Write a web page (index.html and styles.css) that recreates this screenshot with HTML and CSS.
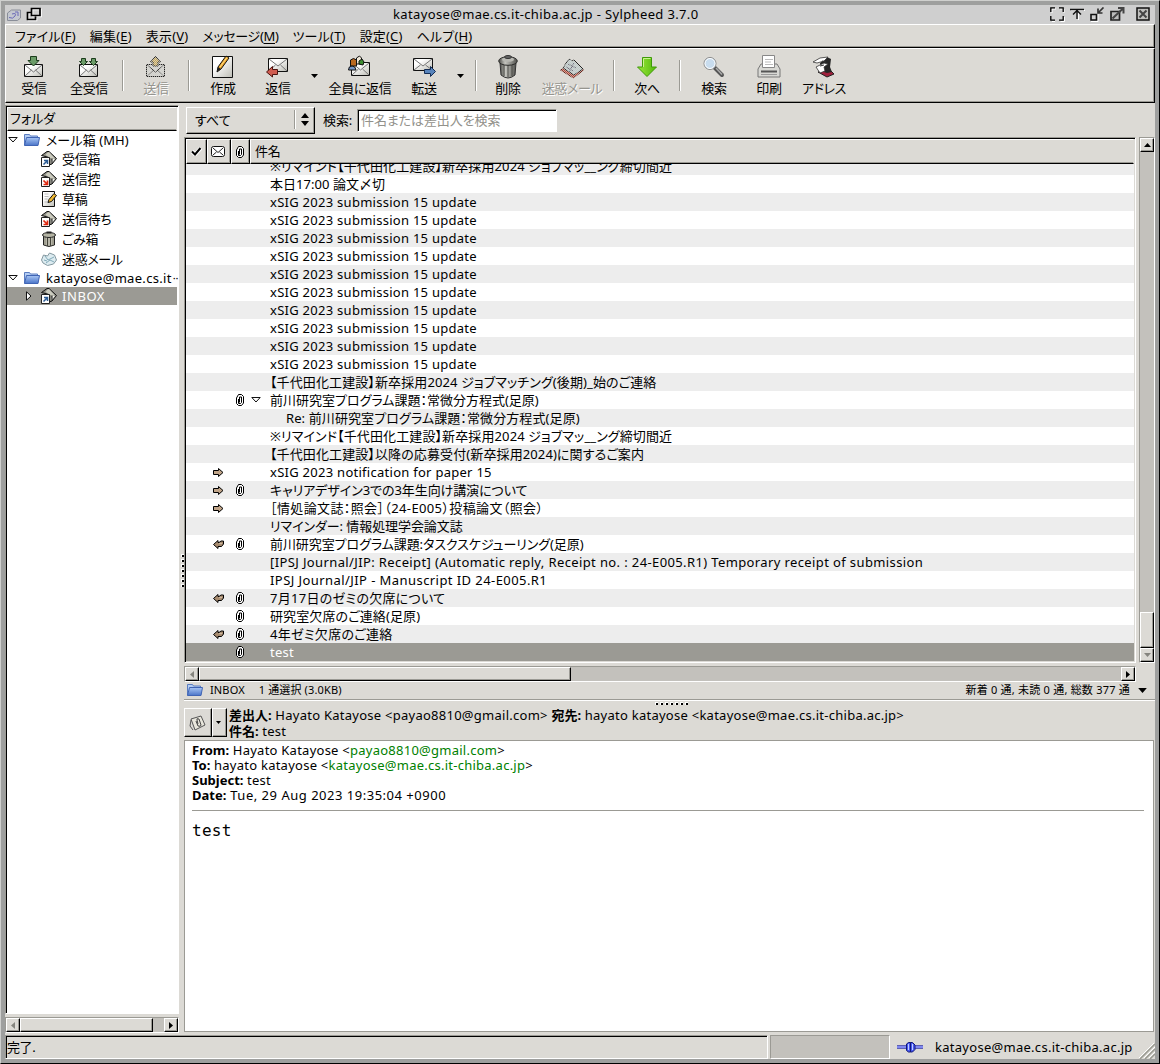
FILE: index.html
```html
<!DOCTYPE html>
<html lang="ja">
<head>
<meta charset="utf-8">
<title>katayose@mae.cs.it-chiba.ac.jp - Sylpheed 3.7.0</title>
<link rel="stylesheet" href="styles.css">
</head>
<body>
<svg class="defs" width="0" height="0">
  <defs>
    <linearGradient id="gFolder" x1="0" y1="0" x2="0" y2="1"><stop offset="0" stop-color="#a8c6f4"/><stop offset="1" stop-color="#4a74c8"/></linearGradient>
    <linearGradient id="gCan" x1="0" x2="1" y1="0" y2="0"><stop offset="0" stop-color="#4c4c48"/><stop offset=".35" stop-color="#c4c4be"/><stop offset="1" stop-color="#50504c"/></linearGradient>
    <linearGradient id="gPaper" x1="0" x2="1" y1="0" y2="1"><stop offset=".3" stop-color="#fff"/><stop offset="1" stop-color="#bdbdb5"/></linearGradient>
    <linearGradient id="gGreen" x1="0" x2="1" y1="0" y2="0"><stop offset="0" stop-color="#9be83c"/><stop offset="1" stop-color="#52b80c"/></linearGradient>
    <pattern id="dots" width="2" height="2" patternUnits="userSpaceOnUse"><path d="M0 0h1v1H0zM1 1h1v1H1z" fill="#dcdad5"/></pattern>
  </defs>
  <symbol id="clip" viewBox="0 0 8 12"><path d="M2.500.5h3l2 2v6.500l-2 2.500h-3l-2-2V4z" fill="#fff" stroke="#000"/><path d="M3.500 8.500V3h2v5.500l-1 1h-2V5" fill="none" stroke="#000"/></symbol>
  <symbol id="fwd" viewBox="0 0 11 9"><path d="M.5 2.500h5v-2l4.500 4-4.500 4v-2h-5z" fill="#c0a488" stroke="#000"/></symbol>
  <symbol id="rep" viewBox="0 0 11 9"><path d="M.5 4.500l4.500-4v2h1L8 1h2.500v3l-2 2.500H5v2z" fill="#a88c70" stroke="#000"/><path d="M6 3.500h3" stroke="#ccb8a0"/></symbol>
  <symbol id="folder" viewBox="0 0 16 12"><path d="M.5 11V.5h5l1 1.500h7V11z" fill="#b4cdf2" stroke="#5a7cc0"/><path d="M.5 11.500L2.500 3.500h13l-1.500 8z" fill="url(#gFolder)" stroke="#4064b4"/></symbol>
  <symbol id="tray" viewBox="0 0 16 16"><path d="M.5 4.500L6 .5h2l7.500 7-4.500 5.500-3 1V6.500z" fill="#8a8a80" stroke="#111"/><path d="M6 2l2-1 6 6.500-3 .5L4.500 4z" fill="#ccccbf"/><path d="M11 8l-1 5 4-5z" fill="#f4f4ee"/><path d="M11 7.500V13" stroke="#111" fill="none"/><path d="M.5 6.500h8v9h-8z" fill="#fff" stroke="#222"/></symbol>
  <symbol id="inbox" viewBox="0 0 16 16"><use href="#tray"/><path d="M2.500 13.500L6 10M3 9.500h3.500V13" stroke="#2c5c94" stroke-width="1.500" fill="none"/></symbol>
  <symbol id="outbox" viewBox="0 0 16 16"><use href="#tray"/><path d="M2.500 9.500L6 13M2.500 13.500h4V9.500" stroke="#e02810" stroke-width="1.700" fill="none"/></symbol>
  <symbol id="note" viewBox="0 0 24 24"><path d="M1.500 1.500h20v21h-20z" fill="url(#gPaper)" stroke="#111"/><path d="M6 17l1-5L15 1l3 2-8 11z" fill="#f0a828" stroke="#111"/><path d="M6 17l1-5 3 2z" fill="#222"/><path d="M9 12L16 2.500" stroke="#ffe090"/></symbol>
  <symbol id="draft" viewBox="0 0 16 16"><path d="M1.500.5h12v15h-12z" fill="url(#gPaper)" stroke="#111"/><path d="M3.500 3h4M3.500 5.500h4M3.500 8h3M3.500 11h5" stroke="#bbb"/><path d="M7 11.500l1-3L13 2.500l2.500 2-5 6z" fill="#f0b830" stroke="#111"/></symbol>
  <symbol id="can" viewBox="0 0 20 24"><path d="M2 8h16l-1 12q-7 6-14 0z" fill="url(#gCan)" stroke="#333"/><path d="M6 10v11M10 10v12M14 10v11" stroke="#4a4a46"/><ellipse cx="10" cy="6" rx="9.300" ry="4.300" fill="url(#gCan)" stroke="#2a2a28"/><ellipse cx="10" cy="4.500" rx="6" ry="2.300" fill="#b8b8b2"/><ellipse cx="10" cy="2" rx="3.500" ry="1.500" fill="#666" stroke="#333"/></symbol>
  <symbol id="smallcan" viewBox="0 0 14 16"><path d="M1.500 4h11v10q-5.500 3-11 0z" fill="#d8d6c8" stroke="#222"/><path d="M3 6v8.500M11 6v8.500" stroke="#666658"/><path d="M5.500 7v8M8.500 7v8" stroke="#44443a" stroke-width="1.400"/><ellipse cx="7" cy="4" rx="6.500" ry="2.500" fill="#b4b4a4" stroke="#222"/><path d="M4.500 1.500h5" stroke="#222" stroke-width="2"/></symbol>
  <symbol id="junk" viewBox="0 0 16 14"><path d="M.5 8l2-5 4 1 2-3 5 2 2 5-3 4-6 1.500L2 11z" fill="#dcebf0" stroke="#8498a0"/><path d="M4 4l3 4 6-3M5 11l4-3 4 2M3 8l3 1" stroke="#82aab8" fill="none"/></symbol>
  <symbol id="au" viewBox="0 0 7 4"><path d="M0 4L3.500 0 7 4z" fill="currentColor"/></symbol>
  <symbol id="ad" viewBox="0 0 7 4"><path d="M0 0L3.500 4 7 0z" fill="currentColor"/></symbol>
  <symbol id="al" viewBox="0 0 4 7"><path d="M4 0L0 3.500 4 7z" fill="currentColor"/></symbol>
  <symbol id="ar" viewBox="0 0 4 7"><path d="M0 0L4 3.500 0 7z" fill="currentColor"/></symbol>
  <symbol id="open" viewBox="0 0 10 6"><path d="M.8.5h8.400L5 5z" fill="#fff" stroke="#111"/></symbol>
  <symbol id="closed" viewBox="0 0 6 10"><path d="M.5.8v8.400L5 5z" fill="#fff" stroke="#111"/></symbol>
</svg>

<div class="window">
  <header class="titlebar">
    <svg class="app" width="14" height="14" viewBox="0 0 14 14"><path d="M.5 5l4-3h9v8l-3 2.500H.5z" fill="#c4c8d0" stroke="#8a8e98"/><path d="M2 9.500q4 2 6-1.500t-3-2M8 4h3v4" stroke="#6a6ab8" fill="none"/></svg>
    <svg class="stack" width="16" height="15" viewBox="0 0 16 15"><path d="M5.500 5.500H1.500v7h8V10M5.500 1.500h8.500v7H5.500z" fill="none" stroke="#fff" stroke-width="1.600" transform="translate(1 1)"/><path d="M5.500 5.500H1.500v7h8V9.500M5.500 1.500h8.500v7H5.500z" fill="none" stroke="#000" stroke-width="1.700"/></svg>
    <h1>katayose@mae.cs.it-chiba.ac.jp - Sylpheed 3.7.0</h1>
    <div class="winbtns">
      <svg width="15" height="15" viewBox="0 0 15 15"><g fill="none"><path d="M2 6V2h4M10 2h4v4M14.500 10v4.500h-4M5 14.500H2" stroke="#fff"/><path d="M.8 5V.8H5M9 .8h4.200V5M13.200 9v4.200H9M5 13.200H.8V9" stroke="#000" stroke-width="1.300"/></g></svg>
      <svg width="15" height="15" viewBox="0 0 15 15"><path d="M1 3.500h14M8.500 4v9" stroke="#fff"/><path d="M0 2.500h14M7 3v9M3 7.500l4-4 4 4" fill="none" stroke="#111" stroke-width="1.400"/></svg>
      <svg width="15" height="15" viewBox="0 0 15 15"><path d="M1 14.500h7V7" stroke="#fff" fill="none"/><path d="M1 7.500h5.500V13H1z" fill="none" stroke="#111" stroke-width="1.600"/><path d="M13.500.5L8.500 5.500M8 1.500V6h4.500" fill="none" stroke="#333" stroke-width="1.700"/></svg>
      <svg width="15" height="15" viewBox="0 0 15 15"><path d="M1 4.500h8.500V13H1z" fill="#bbb" stroke="#222" stroke-width="1.700"/><path d="M2.500 11.500L13 1.500M8 1h5.500v5.500" fill="none" stroke="#444" stroke-width="2"/></svg>
      <svg class="close" width="14" height="14" viewBox="0 0 14 14"><path d="M1 1h12v12H1z" fill="#c0c0be" stroke="#111" stroke-width="1.500"/><path d="M3.500 3.500l7 7M10.500 3.500l-7 7" stroke="#444" stroke-width="2"/></svg>
    </div>
  </header>

  <nav class="menubar">
    <span>ファイル(<u>F</u>)</span><span>編集(<u>E</u>)</span><span>表示(<u>V</u>)</span><span class="tight">メッセージ(<u>M</u>)</span><span>ツール(<u>T</u>)</span><span>設定(<u>C</u>)</span><span>ヘルプ(<u>H</u>)</span>
  </nav>

  <div class="toolbar">
    <button><svg width="22" height="24" viewBox="0 0 22 24"><path d="M1.500 9.500h18v12h-18z" fill="url(#gPaper)" stroke="#111"/><path d="M2 10l8.500 7 8.500-7M2 21l6.500-6M19 21l-6.500-6" fill="none" stroke="#777"/><path d="M7.500 1.500h6v4h2.500L10.500 11 5 5.500h2.500z" fill="#6b9c68" stroke="#1c3c1c"/></svg>受信</button>
    <button><svg width="22" height="24" viewBox="0 0 22 24"><path d="M1.500 9.500h18v12h-18z" fill="url(#gPaper)" stroke="#111"/><path d="M2 10l8.500 7 8.500-7M2 21l6.500-6M19 21l-6.500-6" fill="none" stroke="#777"/><path d="M3.500 3.500h4v3h2L5.500 10.500 1.500 6.500h2zM13.500 3.500h4v3h2l-4 4-4-4h2z" fill="#6b9c68" stroke="#1c3c1c"/></svg>全受信</button>
    <i class="sep"></i>
    <button class="off"><svg width="22" height="24" viewBox="0 0 22 24"><path d="M1.500 9.500h18v12h-18z" fill="#d0d0cc" stroke="#222"/><path d="M2 10l8.500 7 8.500-7M2 21l6.500-6M19 21l-6.500-6" fill="none" stroke="#333"/><path d="M8 11V7H5.500L10.500 1.500 15.500 7H13v4z" fill="#c8a858" stroke="#222"/><path d="M0 0h22v24H0z" fill="url(#dots)" opacity=".7" shape-rendering="crispEdges"/></svg>送信</button>
    <i class="sep"></i>
    <button><svg width="24" height="24"><use href="#note"/></svg>作成</button>
    <button><svg width="24" height="24" viewBox="0 0 24 24"><path d="M2.500 3.500h19v13h-19z" fill="url(#gPaper)" stroke="#111"/><path d="M3 4l9 7 9-7M3 16l6.500-6M21 16l-6.500-6" fill="none" stroke="#777"/><path d="M11.500 14.500v5H6.500v2.500L.5 17l6-5.500v3z" fill="#d05c50" stroke="#4c1410"/></svg>返信</button>
    <b class="drop"><svg width="7" height="4"><use href="#ad"/></svg></b>
    <button><svg width="24" height="24" viewBox="0 0 24 24"><path d="M3.500 7.500h18v13h-18z" fill="url(#gPaper)" stroke="#111"/><path d="M4 8l8.500 7L21 8M4 20l6.500-6M21 20l-6.500-6" fill="none" stroke="#777"/><path d="M2.500 11V5q3-3 6 0v6z" fill="#b86820" stroke="#111"/><path d="M8.500 9V3l3-2 2 2v6z" fill="#f0e8d8" stroke="#111"/><path d="M11 9V6l3-2 2 3-1 3z" fill="#3c8c30" stroke="#111"/><path d="M.5 15q0-4 3.500-4t4 4z" fill="#7898c8" stroke="#111"/></svg>全員に返信</button>
    <button><svg width="24" height="24" viewBox="0 0 24 24"><path d="M1.500 3.500h19v12h-19z" fill="url(#gPaper)" stroke="#111"/><path d="M2 4l9 7 9-7M2 15l6.500-5M20 15l-6.500-5" fill="none" stroke="#777"/><path d="M12.500 14.500h6v-3l5 5-5 5v-3h-6z" fill="#5884bc" stroke="#142c54"/></svg>転送</button>
    <b class="drop"><svg width="7" height="4"><use href="#ad"/></svg></b>
    <i class="sep"></i>
    <button><svg width="20" height="24"><use href="#can"/></svg>削除</button>
    <button class="off"><svg width="24" height="24" viewBox="0 0 24 24"><path d="M.5 15L13 9l10.500 6-10 8z" fill="#b84838" stroke="#602018"/><path d="M3 13l5-8 2-1 2 2 2-1 9 9-9 6z" fill="#bccaca" stroke="#222"/><path d="M6 12l7 4M8 9l8 4M14 8l-5 9" stroke="#667" fill="none"/><path d="M0 0h24v24H0z" fill="url(#dots)" opacity=".65" shape-rendering="crispEdges"/></svg>迷惑メール</button>
    <i class="sep"></i>
    <button><svg width="22" height="24" viewBox="0 0 22 24"><path d="M6.500 2.500h9v9.500h5L11 21.500 1.500 12h5z" fill="url(#gGreen)" stroke="#3f9a08" stroke-linejoin="round"/><path d="M7.500 12V3.500h7" fill="none" stroke="#c8f48c"/></svg>次へ</button>
    <i class="sep"></i>
    <button><svg width="24" height="24" viewBox="0 0 24 24"><path d="M13 13l7 7" stroke="#555" stroke-width="4" stroke-linecap="round"/><path d="M14 13l6 6.500" stroke="#aaa" stroke-width="1.500"/><circle cx="8" cy="8.500" r="6" fill="#c8dcee" stroke="#888"/><circle cx="8" cy="8.500" r="5" fill="none" stroke="#fff"/></svg>検索</button>
    <button><svg width="24" height="24" viewBox="0 0 24 24"><path d="M4 9h16l3 5v8H1v-8z" fill="#d8d8d4" stroke="#777"/><path d="M5.500.5h12v12h-12z" fill="#fff" stroke="#888"/><path d="M8 4.500h8M8 7h6M8 9.500h8" stroke="#bbb"/><path d="M4 16.500h16" stroke="#555" stroke-width="2"/><path d="M4 19.500h16" stroke="#999"/></svg>印刷</button>
    <button><svg width="24" height="24" viewBox="0 0 24 24"><path d="M6 17l11-3 5 5-7 3z" fill="#a0203c" stroke="#222"/><path d="M8 8l7-6 4 2-1 8 2 5-5 1-6-2z" fill="#262626"/><path d="M1 7l7-4 8-1-4 4-7 2zM4 12l8-4 4 1-4 3 1 4-5 2-2-3z" fill="#fff" stroke="#333" stroke-width=".8"/><path d="M10 6l4 1M8 11l4-1" stroke="#333"/></svg>アドレス</button>
  </div>

  <main class="panes">
    <aside class="folders">
      <div class="tree">
        <div class="treehead">フォルダ</div>
        <ul>
          <li class="root"><svg class="exp" width="10" height="6"><use href="#open"/></svg><svg width="16" height="12"><use href="#folder"/></svg><span>メール箱 (MH)</span></li>
          <li><svg width="16" height="16"><use href="#inbox"/></svg><span>受信箱</span></li>
          <li><svg width="16" height="16"><use href="#outbox"/></svg><span>送信控</span></li>
          <li><svg width="16" height="16"><use href="#draft"/></svg><span>草稿</span></li>
          <li><svg width="16" height="16"><use href="#outbox"/></svg><span>送信待ち</span></li>
          <li><svg width="16" height="16"><use href="#smallcan"/></svg><span>ごみ箱</span></li>
          <li><svg width="16" height="14"><use href="#junk"/></svg><span>迷惑メール</span></li>
          <li class="root latin"><svg class="exp" width="10" height="6"><use href="#open"/></svg><svg width="16" height="12"><use href="#folder"/></svg><span>katayose@mae.cs.it</span><em>··</em></li>
          <li class="sel latin"><svg class="exp" width="6" height="10"><use href="#closed"/></svg><svg width="16" height="16"><use href="#inbox"/></svg><span>INBOX</span></li>
        </ul>
      </div>
      <div class="hscroll">
        <b class="arrow dim"><svg width="4" height="7"><use href="#al"/></svg></b><b class="thumb"></b><i></i><b class="arrow"><svg width="4" height="7"><use href="#ar"/></svg></b>
      </div>
    </aside>
    <div class="vgrip"><i></i></div>

    <section class="mail">
      <div class="filter">
        <div class="combo"><span>すべて</span><svg width="8" height="13" viewBox="0 0 8 13"><path d="M0 5L4 0l4 5zM0 8l4 5 4-5z"/></svg></div>
        <label>検索:</label>
        <input placeholder="件名または差出人を検索">
      </div>

      <div class="listwrap">
        <div class="list">
          <div class="row head">
            <span><svg width="11" height="9" viewBox="0 0 11 9"><path d="M1 4.500l3 3L10 1" fill="none" stroke="#fff" stroke-width="4"/><path d="M1 4.500l3 3L9.500 1" fill="none" stroke="#000" stroke-width="2"/></svg></span>
            <span><svg width="15" height="11" viewBox="0 0 15 11"><rect x=".5" y=".5" width="13" height="10" rx="2" fill="#fff" stroke="#111"/><path d="M2 2l5 4.500L12 2M2 9l3.500-3M12 9L8.500 6" fill="none" stroke="#222"/></svg></span>
            <span><svg width="8" height="12"><use href="#clip"/></svg></span>
            <span>件名</span>
          </div>
          <div class="rows">
            <div class="row"><i></i><i></i><i></i><p class="j1">※リマインド【千代田化工建設】新卒採用2024 ジョブマッ__ング締切間近</p></div>
            <div class="row"><i></i><i></i><i></i><p>本日17:00 論文〆切</p></div>
            <div class="row"><i></i><i></i><i></i><p class="l2">xSIG 2023 submission 15 update</p></div>
            <div class="row"><i></i><i></i><i></i><p class="l2">xSIG 2023 submission 15 update</p></div>
            <div class="row"><i></i><i></i><i></i><p class="l2">xSIG 2023 submission 15 update</p></div>
            <div class="row"><i></i><i></i><i></i><p class="l2">xSIG 2023 submission 15 update</p></div>
            <div class="row"><i></i><i></i><i></i><p class="l2">xSIG 2023 submission 15 update</p></div>
            <div class="row"><i></i><i></i><i></i><p class="l2">xSIG 2023 submission 15 update</p></div>
            <div class="row"><i></i><i></i><i></i><p class="l2">xSIG 2023 submission 15 update</p></div>
            <div class="row"><i></i><i></i><i></i><p class="l2">xSIG 2023 submission 15 update</p></div>
            <div class="row"><i></i><i></i><i></i><p class="l2">xSIG 2023 submission 15 update</p></div>
            <div class="row"><i></i><i></i><i></i><p class="l2">xSIG 2023 submission 15 update</p></div>
            <div class="row"><i></i><i></i><i></i><p class="j1">【千代田化工建設】新卒採用2024 ジョブマッチング(後期)_始のご連絡</p></div>
            <div class="row"><i></i><i></i><i><svg width="8" height="12"><use href="#clip"/></svg></i><p class="parent"><svg width="10" height="6"><use href="#open"/></svg>前川研究室プログラム課題：常微分方程式(足原)</p></div>
            <div class="row"><i></i><i></i><i></i><p class="reply">Re: 前川研究室プログラム課題：常微分方程式(足原)</p></div>
            <div class="row"><i></i><i></i><i></i><p class="j1">※リマインド【千代田化工建設】新卒採用2024 ジョブマッ__ング締切間近</p></div>
            <div class="row"><i></i><i></i><i></i><p class="j1">【千代田化工建設】以降の応募受付(新卒採用2024)に関するご案内</p></div>
            <div class="row"><i></i><i><svg width="11" height="9"><use href="#fwd"/></svg></i><i></i><p class="l2">xSIG 2023 notification for paper 15</p></div>
            <div class="row"><i></i><i><svg width="11" height="9"><use href="#fwd"/></svg></i><i><svg width="8" height="12"><use href="#clip"/></svg></i><p class="jn">キャリアデザイン3での3年生向け講演について</p></div>
            <div class="row"><i></i><i><svg width="11" height="9"><use href="#fwd"/></svg></i><i></i><p class="l3">［情処論文誌：照会］（24-E005）投稿論文（照会）</p></div>
            <div class="row"><i></i><i></i><i></i><p class="jn">リマインダー: 情報処理学会論文誌</p></div>
            <div class="row"><i></i><i><svg width="11" height="9"><use href="#rep"/></svg></i><i><svg width="8" height="12"><use href="#clip"/></svg></i><p class="jn">前川研究室プログラム課題:タスクスケジューリング(足原)</p></div>
            <div class="row"><i></i><i></i><i></i><p class="l3">[IPSJ Journal/JIP: Receipt] (Automatic reply, Receipt no. : 24-E005.R1) Temporary receipt of submission</p></div>
            <div class="row"><i></i><i></i><i></i><p class="l4">IPSJ Journal/JIP - Manuscript ID 24-E005.R1</p></div>
            <div class="row"><i></i><i><svg width="11" height="9"><use href="#rep"/></svg></i><i><svg width="8" height="12"><use href="#clip"/></svg></i><p class="l2">7月17日のゼミの欠席について</p></div>
            <div class="row"><i></i><i></i><i><svg width="8" height="12"><use href="#clip"/></svg></i><p class="j1">研究室欠席のご連絡(足原)</p></div>
            <div class="row"><i></i><i><svg width="11" height="9"><use href="#rep"/></svg></i><i><svg width="8" height="12"><use href="#clip"/></svg></i><p class="l2">4年ゼミ欠席のご連絡</p></div>
            <div class="row sel"><i></i><i></i><i><svg width="8" height="12"><use href="#clip"/></svg></i><p class="l2">test</p></div>
          </div>
        </div>
        <div class="vscroll">
          <b class="arrow"><svg width="7" height="4"><use href="#au"/></svg></b><i></i><b class="thumb"></b><b class="arrow dim"><svg width="7" height="4"><use href="#ad"/></svg></b>
        </div>
      </div>
      <div class="hscroll wide">
        <b class="arrow dim"><svg width="4" height="7"><use href="#al"/></svg></b><b class="thumb"></b><i></i><b class="arrow"><svg width="4" height="7"><use href="#ar"/></svg></b>
      </div>

      <div class="summary">
        <svg width="16" height="12"><use href="#folder"/></svg><span class="box">INBOX</span><span>1 通選択 (3.0KB)</span>
        <span class="count">新着 0 通, 未読 0 通, 総数 377 通</span><svg class="more" width="9" height="5" viewBox="0 0 7 4"><use href="#ad"/></svg>
      </div>
      <div class="hgrip"><i></i></div>

      <div class="brief">
        <div class="attach">
          <b><svg width="18" height="18" viewBox="0 0 18 18"><path d="M2 5l10-3 4 9-10 5z" fill="#e8e6dc" stroke="#555"/><path d="M2 6l-1 6 3 4" fill="none" stroke="#555"/><path d="M7 7l2 5q3 1 3-1l-2-6q-3-1-2 1l1 4" fill="none" stroke="#444"/></svg></b>
          <b class="mini"><svg width="5" height="3" viewBox="0 0 7 4"><use href="#ad"/></svg></b>
        </div>
        <div class="lines">
          <div><strong>差出人:</strong> Hayato Katayose &lt;payao8810@gmail.com&gt; <strong>宛先:</strong> hayato katayose &lt;katayose@mae.cs.it-chiba.ac.jp&gt;</div>
          <div><strong>件名:</strong> test</div>
        </div>
      </div>

      <article class="message">
        <div><strong>From:</strong> Hayato Katayose &lt;<a>payao8810@gmail.com</a>&gt;</div>
        <div><strong>To:</strong> hayato katayose &lt;<a>katayose@mae.cs.it-chiba.ac.jp</a>&gt;</div>
        <div><strong>Subject:</strong> test</div>
        <div class="date"><strong>Date:</strong> Tue, 29 Aug 2023 19:35:04 +0900</div>
        <hr>
        <pre>test</pre>
      </article>
    </section>
  </main>

  <footer class="status">
    <div class="msg">完了.</div>
    <div class="progress"></div>
    <svg class="plug" width="26" height="12" viewBox="0 0 26 12"><path d="M0 5h26v2H0z" fill="#8088f0"/><path d="M0 4.500h26M0 7.500h26" stroke="#3c40a8" stroke-width=".8"/><path d="M9.500 3l2-1.500h2V11h-2l-2-1.500zM13.500 1.500h2L18 4v4.500l-2.500 2.500h-2z" fill="#4858f0" stroke="#101878"/><path d="M11.500 3v6M15.500 3v6" stroke="#c0ccff"/></svg>
    <span class="acct">katayose@mae.cs.it-chiba.ac.jp</span>
    <svg class="grip" width="16" height="16" viewBox="0 0 16 16"><path d="M1 16L16 1M6 16L16 6M11 16l5-5" stroke="#999990" stroke-width="1.500"/><path d="M0 15L15 0M5 15L16 4M10 15l6-6" stroke="#fff"/></svg>
  </footer>
</div>
</body>
</html>
```
FILE: styles.css
```css
* { box-sizing: border-box; margin: 0; padding: 0; }
:root { --bg: #dcdad5; --dark: #9b9a94; --trough: #c3c1bc; }
body {
  font: 13px/18px "Noto Sans", "Noto Sans CJK JP", sans-serif;
  font-feature-settings: "palt";
  letter-spacing: .05px;
  color: #000;
  overflow: hidden;
}
svg { display: block; flex: none; }
i, em { font-style: normal; }
.defs { position: absolute; }

.window {
  width: 1160px; height: 1064px;
  display: flex; flex-direction: column;
  background: var(--bg);
  border: 1px solid; border-color: #cfd0ce #000 #000 #cfd0ce;
  box-shadow: inset 0 0 0 4px #9e9f9e;
  padding: 4px;
}

.titlebar { height: 19px; flex: none; background: #cfcfcf; display: flex; align-items: center; padding: 0 5px 0 2px; }
.titlebar .stack { margin-left: 5px; }
.titlebar h1 { flex: 1; padding: 0 0 1px 351px; font-size: 13px; line-height: 17px; font-weight: normal; letter-spacing: .36px; white-space: nowrap; }
.winbtns { display: flex; gap: 5px; }
.winbtns .close { margin-left: 6px; }

.menubar, .toolbar { flex: none; border: 1px solid; border-color: #fff #000 #000 #fff; box-shadow: inset -1px -1px var(--dark); }
.menubar { height: 24px; display: flex; align-items: center; gap: 14px; padding: 0 9px; letter-spacing: .18px; }
.menubar .tight { letter-spacing: -.33px; }
.menubar u { text-underline-offset: 2px; }

.toolbar {
  height: 55px; padding: 6px 0 0 1px;
  display: grid;
  grid-template-columns: 54px 56px 12px 54px 13px 54px 56px 16px 76px 52px 20px 10px 56px 72px 12px 54px 14px 52px 58px 52px;
}
.toolbar button {
  display: flex; flex-direction: column; align-items: center;
  border: 0; background: none; font: inherit; font-feature-settings: inherit;
  letter-spacing: -.35px; white-space: nowrap; line-height: 18px; height: 44px;
}
.toolbar .off { color: #96958f; text-shadow: 1px 1px #fff; }
.toolbar .sep { width: 2px; height: 31px; margin: 5px auto 0 5px; background: var(--dark); border-right: 1px solid #fff; }
.toolbar .drop { display: flex; justify-content: center; padding-top: 19px; }

.panes { flex: 1; min-height: 0; display: grid; grid-template-columns: 174px 5px 1fr; }

.folders { display: flex; flex-direction: column; padding: 2px 0; }
.tree { height: 909px; border: 1px solid; border-color: var(--dark) #fff #fff var(--dark); box-shadow: inset 1px 1px #000; background: #fff; padding: 1px 1px 0 1px; }
.treehead { height: 24px; background: var(--bg); border: 1px solid; border-color: #fff var(--bg) #000 #fff; box-shadow: inset 0 -1px var(--dark); padding: 1px 0 0 2px; letter-spacing: 0; }
.tree ul { list-style: none; }
.tree li { display: flex; align-items: center; height: 20px; padding-left: 34px; gap: 5px; white-space: nowrap; letter-spacing: -.3px; }
.tree li.root { height: 18px; padding-left: 1px; letter-spacing: .1px; }
.tree li.root .exp { margin-right: 1px; }
.tree li.root span { margin-left: 1px; }
.tree li.latin { letter-spacing: .3px; }
.tree em { margin-left: -4px; line-height: 16px; letter-spacing: 0; font-size: 11px; }
.tree li.sel { height: 18px; padding-left: 19px; gap: 6px; background: var(--dark); color: #fff; letter-spacing: .55px; }
.tree li.sel .exp { margin-right: 3px; }
.tree li.sel span { margin-left: -1px; }

.arrow, .thumb { display: flex; align-items: center; justify-content: center; background: var(--bg); border: 1px solid; border-color: #fff #000 #000 #fff; box-shadow: inset -1px -1px var(--dark); }
.arrow { width: 14px; height: 14px; flex: none; }
.dim { color: #85847e; }
.hscroll { display: flex; height: 16px; margin-top: 3px; background: var(--trough); border: 1px solid; border-color: var(--dark) #fff #fff var(--dark); }
.hscroll .thumb { width: 133px; }
.hscroll i { flex: 1; }
.hscroll.wide { width: 952px; }
.hscroll.wide .thumb { width: 372px; }

.vgrip { display: flex; align-items: flex-start; justify-content: center; padding: 451px 0 0 1px; }
.vgrip i { width: 3px; height: 34px; background: linear-gradient(#000, #000) 1px 1px/2px 2px no-repeat; background: conic-gradient(from 90deg at 1px 1px, #000 25%, #fff 0) 0 0/3px 5px; -webkit-mask: linear-gradient(#000 60%, transparent 0) 0 0/3px 5px; }

.mail { display: flex; flex-direction: column; min-width: 0; }
.filter { height: 34px; display: flex; align-items: flex-start; padding: 4px 0 0 2px; }
.combo { width: 129px; height: 27px; display: flex; align-items: center; justify-content: space-between; padding: 0 5px 2px 8px; border: 1px solid; border-color: #fff #000 #000 #fff; box-shadow: inset -1px -1px var(--dark); }
.combo svg { box-sizing: content-box; border-left: 1px solid #fff; box-shadow: -1px 0 var(--dark); padding: 3px 0 3px 5px; }
.filter label { margin: 4px 4px 0 8px; width: 30px; letter-spacing: -.1px; }
.filter input { width: 200px; height: 23px; margin-top: 2px; border: 1px solid; border-color: var(--dark) #fff #fff var(--dark); box-shadow: inset 1px 1px #000; padding: 0 0 2px 3px; font: inherit; font-feature-settings: inherit; letter-spacing: -.1px; outline: 0; }
.filter input::placeholder { color: #92918b; }

.listwrap { display: flex; gap: 3px; height: 526px; }
.list { width: 952px; border: 1px solid; border-color: var(--dark) #fff #fff var(--dark); box-shadow: inset 1px 1px #000, inset -1px -1px var(--bg); padding: 1px; }
.row { display: grid; grid-template-columns: 21px 24px 19px 1fr; height: 18px; }
.head { height: 25px; }
.head span { display: flex; align-items: center; justify-content: center; padding-right: 1px; background: var(--bg); border: 1px solid; border-color: #fff #000 #000 #fff; box-shadow: inset -1px -1px var(--dark); }
.head span:last-child { justify-content: flex-start; padding: 0 0 2px 4px; border-right-color: var(--bg); box-shadow: inset 0 -1px var(--dark); letter-spacing: -.3px; }
.rows { height: 497px; display: flex; flex-direction: column; justify-content: flex-end; overflow: hidden; }
.rows .row { flex: none; background: #fff; }
.rows .row:nth-child(odd) { background: #ededed; }
.rows .row i { display: flex; align-items: center; justify-content: center; padding: 0 2px 0 0; }
.rows .row p { padding-left: 20px; white-space: nowrap; }
.rows .row.sel { background: var(--dark); color: #fff; }
.rows .row .parent { display: flex; align-items: center; gap: 9px; padding-left: 1px; letter-spacing: 0; }
.rows .row .reply { padding-left: 36px; letter-spacing: .1px; }
.j1 { letter-spacing: .11px; }
.jn { letter-spacing: -.07px; }
.l2 { letter-spacing: .27px; }
.l3 { letter-spacing: .38px; }
.l4 { letter-spacing: .43px; }

.vscroll { width: 16px; display: flex; flex-direction: column; background: var(--trough); border: 1px solid; border-color: var(--dark) #fff #fff var(--dark); }
.vscroll i { flex: 1; }
.vscroll .thumb { height: 36px; }

.summary { height: 19px; flex: none; display: flex; align-items: center; padding: 0 8px 2px 3px; font-size: 11px; letter-spacing: .14px; border-bottom: 1px solid #fff; box-shadow: inset 0 -1px var(--dark); }
.summary .box { margin: 0 14px 0 7px; }
.summary .count { margin-left: auto; letter-spacing: .22px; }
.summary .more { margin-left: 8px; }
.hgrip { height: 6px; flex: none; padding: 1px 0 0 471px; }
.hgrip i { display: block; width: 33px; height: 3px; background: conic-gradient(from 90deg at 1px 1px, #000 25%, #fff 0) 0 0/5px 3px; -webkit-mask: linear-gradient(90deg, #000 60%, transparent 0) 0 0/5px 3px; }

.brief { height: 33px; flex: none; display: flex; gap: 2px; letter-spacing: .26px; line-height: 16px; }
.attach { display: flex; height: 29px; margin-top: 1px; }
.attach b { width: 28px; display: flex; align-items: center; justify-content: center; border: 1px solid; border-color: #fff #000 #000 #fff; box-shadow: inset -1px -1px var(--dark); }
.attach .mini { width: 15px; padding-right: 2px; }
.lines { white-space: nowrap; }
.brief strong { letter-spacing: 0; }

.message { height: 292px; width: 970px; background: #fff; border: 1px solid var(--dark); padding: 2px 9px 0 7px; line-height: 15px; letter-spacing: .25px; }
.message strong { letter-spacing: 0; }
.message a { color: #008000; }
.message .date { letter-spacing: .51px; }
.message hr { border: 0; border-top: 1px solid var(--dark); margin: 7px 0 11px; }
.message pre { font: 16px/18px "DejaVu Sans Mono", monospace; letter-spacing: .3px; }

.status { height: 24px; flex: none; display: flex; align-items: center; }
.status .msg { width: 763px; height: 24px; border: 1px solid; border-color: var(--dark) #fff #fff var(--dark); box-shadow: inset 1px 1px #000; padding: 2px 0 0 1px; letter-spacing: -.4px; }
.status .progress { width: 120px; height: 24px; margin: 0 7px 0 2px; background: var(--trough); border: 1px solid; border-color: var(--dark) #fff #fff var(--dark); }
.status .acct { margin: 0 auto 0 12px; letter-spacing: .28px; }
.status .grip { align-self: flex-end; }
```
